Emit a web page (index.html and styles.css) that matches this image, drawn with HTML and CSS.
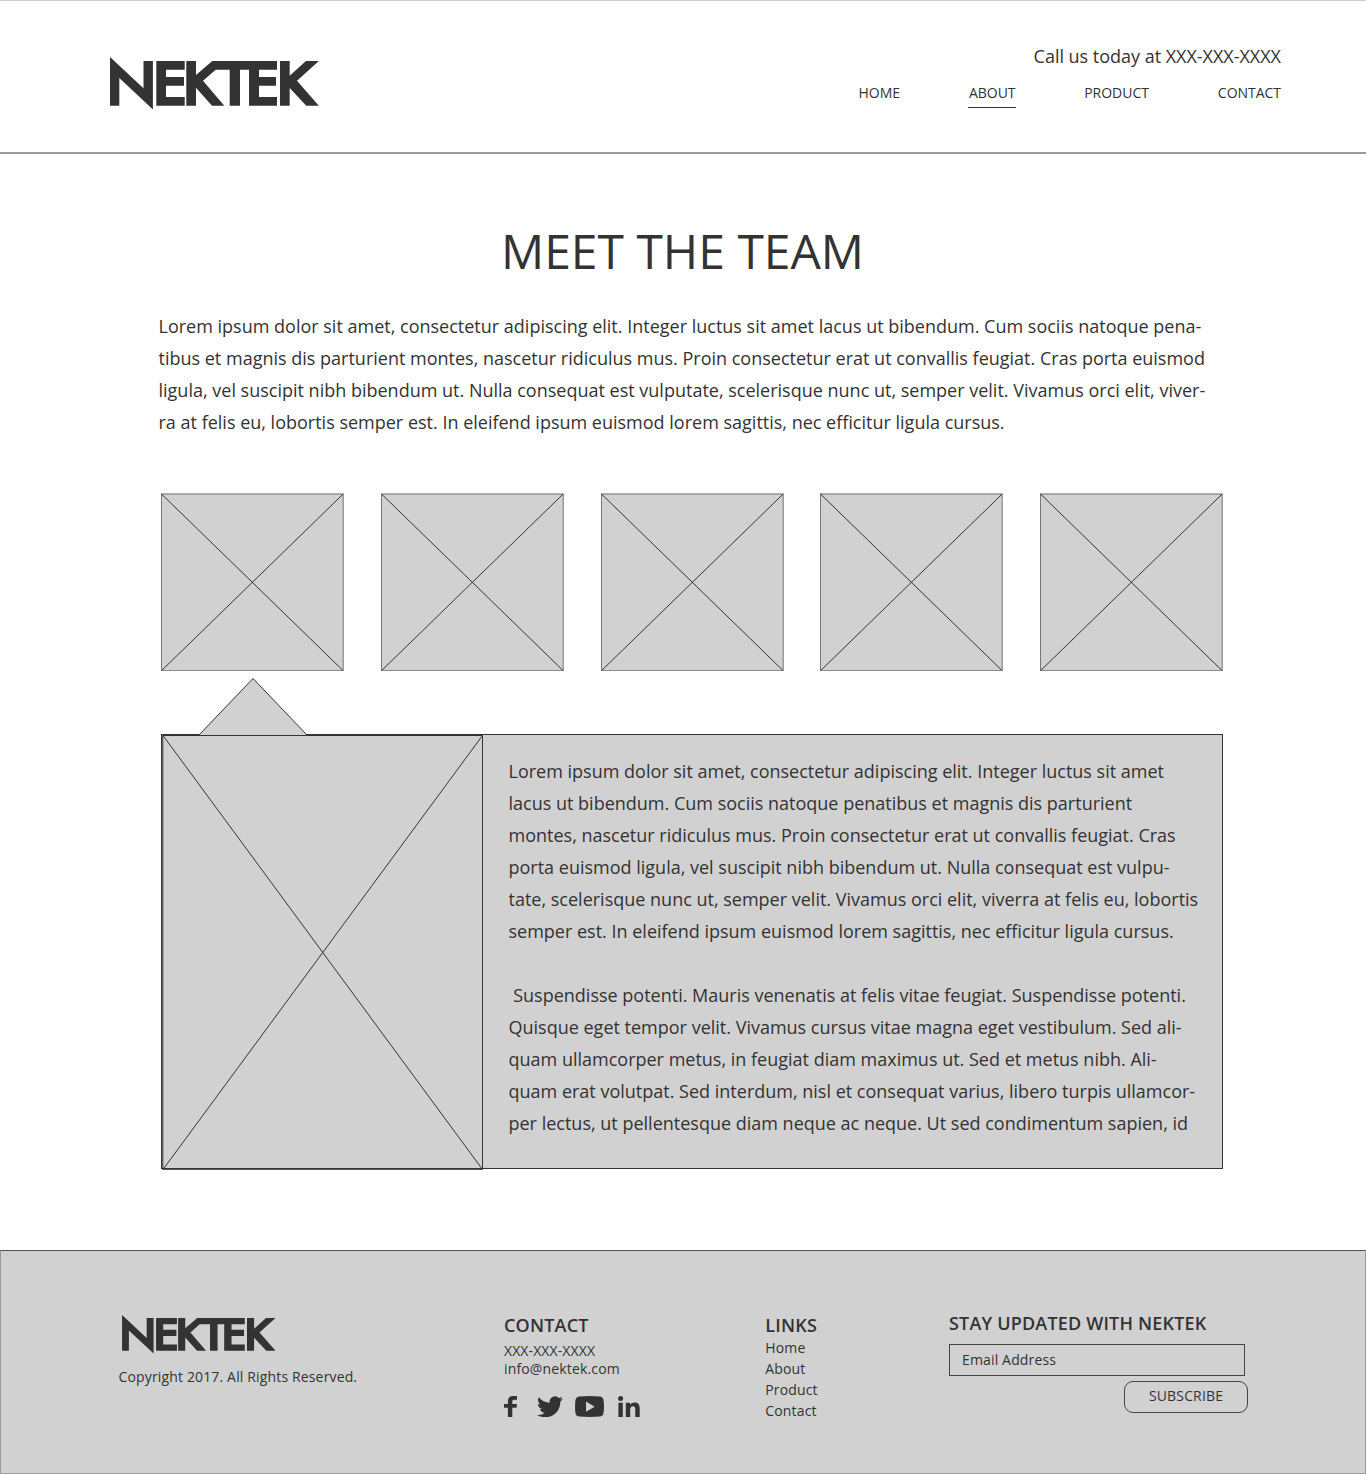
FILE: index.html
```html
<!DOCTYPE html>
<html lang="en">
<head>
<meta charset="utf-8">
<title>Nektek - Meet the Team</title>
<link rel="stylesheet" href="styles.css">
</head>
<body>
<svg class="defs" aria-hidden="true">
  <symbol id="logo" viewBox="0 0 209 52.4">
    <path d="M0 0 33.500 31.200V4h9.400v48.400L9.300 21V48.700H0zM46.300 4h28.400v8.700H56v7.300h18v8.700H56V40h18.700v8.700H46.300zM76.300 4H86v14L102.300 4H167v8.700H149v7.300h17v8.700H149V40h18v8.700H139V12.700h-9v36h-10.300v-36H105.700L93 23.700l21.300 25H102L86 30.700v18h-9.700zM170 4h9.700v14.700L196 4h12.900L187 23.700l21.900 25H196.300L179.700 31v17.700H170z"/>
  </symbol>
  <symbol id="placeholder" viewBox="0 0 183 178">
    <path class="fill" d="M.3.500h182.200V177.800H.3z"/>
    <path class="edge" d="M.5 1H182.200V177.700H.5z"/>
    <path class="line" d="M.5 1 182.200 177.700M182.200 1 .5 177.700"/>
  </symbol>
</svg>

<header class="header">
  <svg class="logo"><use href="#logo"/></svg>
  <div class="header-right">
    <p class="phone">Call us today at XXX-XXX-XXXX</p>
    <nav class="nav">
      <a>HOME</a><a class="active">ABOUT</a><a>PRODUCT</a><a>CONTACT</a>
    </nav>
  </div>
</header>

<main class="main">
  <h1 class="title">MEET THE TEAM</h1>
  <p class="intro">Lorem ipsum dolor sit amet, consectetur adipiscing elit. Integer luctus sit amet lacus ut bibendum. Cum sociis natoque pena-<br>tibus et magnis dis parturient montes, nascetur ridiculus mus. Proin consectetur erat ut convallis feugiat. Cras porta euismod<br>ligula, vel suscipit nibh bibendum ut. Nulla consequat est vulputate, scelerisque nunc ut, semper velit. Vivamus orci elit, viver-<br>ra at felis eu, lobortis semper est. In eleifend ipsum euismod lorem sagittis, nec efficitur ligula cursus.</p>

  <div class="team">
    <svg class="thumb"><use href="#placeholder"/></svg>
    <svg class="thumb"><use href="#placeholder"/></svg>
    <svg class="thumb"><use href="#placeholder"/></svg>
    <svg class="thumb"><use href="#placeholder"/></svg>
    <svg class="thumb"><use href="#placeholder"/></svg>
  </div>

  <section class="detail">
    <svg class="pointer" viewBox="0 0 110 58"><path d="M.5 57.500 55 .5 109 57.500z" fill="#d1d1d1"/><path d="M1 57 55 .5 109 57" fill="none" stroke="#333"/><path d="M1 57.500H109" stroke="#333"/></svg>
    <svg class="portrait" viewBox="0 0 322 435"><path class="portrait-frame" d="M.8.500H320.500V434.300H.8z"/><path class="line" d="M1 .5 320.500 434.500M320.500 .5 1 434.500"/></svg>
    <div class="bio">
      <p>Lorem ipsum dolor sit amet, consectetur adipiscing elit. Integer luctus sit amet<br>lacus ut bibendum. Cum sociis natoque penatibus et magnis dis parturient<br>montes, nascetur ridiculus mus. Proin consectetur erat ut convallis feugiat. Cras<br>porta euismod ligula, vel suscipit nibh bibendum ut. Nulla consequat est vulpu-<br>tate, scelerisque nunc ut, semper velit. Vivamus orci elit, viverra at felis eu, lobortis<br>semper est. In eleifend ipsum euismod lorem sagittis, nec efficitur ligula cursus.</p>
      <p>&nbsp;Suspendisse potenti. Mauris venenatis at felis vitae feugiat. Suspendisse potenti.<br>Quisque eget tempor velit. Vivamus cursus vitae magna eget vestibulum. Sed ali-<br>quam ullamcorper metus, in feugiat diam maximus ut. Sed et metus nibh. Ali-<br>quam erat volutpat. Sed interdum, nisl et consequat varius, libero turpis ullamcor-<br>per lectus, ut pellentesque diam neque ac neque. Ut sed condimentum sapien, id</p>
    </div>
  </section>
</main>

<footer class="footer">
  <div class="brand">
    <svg class="logo-small"><use href="#logo"/></svg>
    <p class="copyright">Copyright 2017. All Rights Reserved.</p>
  </div>
  <div class="contact">
    <h2>CONTACT</h2>
    <p class="contact-phone">XXX-XXX-XXXX</p>
    <p class="contact-mail">info@nektek.com</p>
    <div class="social">
      <svg width="13" height="21" viewBox="0 0 13 21"><path d="M3.900 21V11.700H0V8h3.900V5.200C3.900 1.700 6 0 9.200 0H13v3.700h-2.500C8.800 3.700 8.300 4.400 8.300 5.600V8H13l-.5 3.700H8.300V21z"/></svg>
      <svg width="26" height="21" viewBox="0 2 24 19.500" preserveAspectRatio="none"><path d="M23.950 4.570a10 10 0 0 1-2.820.77 4.960 4.960 0 0 0 2.160-2.720c-.95.550-2 .960-3.130 1.180a4.920 4.920 0 0 0-8.380 4.480C7.690 8.090 4.070 6.130 1.640 3.160a4.820 4.820 0 0 0-.67 2.480c0 1.710.87 3.210 2.190 4.100a4.900 4.900 0 0 1-2.230-.62v.06a4.920 4.920 0 0 0 3.950 4.830 5 5 0 0 1-2.210.08 4.940 4.940 0 0 0 4.600 3.420A9.870 9.870 0 0 1 0 19.540a13.990 13.990 0 0 0 7.550 2.210c9.050 0 14-7.500 14-13.980 0-.210 0-.420-.02-.63a9.940 9.940 0 0 0 2.420-2.570z"/></svg>
      <svg width="29" height="21" viewBox="0 0 29 21"><path fill-rule="evenodd" d="M4.500.4Q14.500-.4 24.500.4 28.300.6 28.600 4.500 29.300 10.500 28.600 16.500 28.300 20.400 24.500 20.600 14.500 21.400 4.500 20.600.7 20.400.4 16.500-.3 10.500.4 4.500.7.6 4.500.4zM11 5.500v10.300l8.700-5.100z"/></svg>
      <svg width="22" height="21" viewBox="0 0 22 21"><circle cx="2.600" cy="2.500" r="2.500"/><path d="M.4 6.800h4.400V21H.4zM7.800 6.800H12v2c.7-1.200 2.200-2.300 4.500-2.300 4.200 0 5.200 2.700 5.200 6.500v8h-4.400v-7c0-2-.2-3.800-2.400-3.800S12.200 12 12.200 14v7H7.800z"/></svg>
    </div>
  </div>
  <div class="links">
    <h2>LINKS</h2>
    <a>Home</a><a>About</a><a>Product</a><a>Contact</a>
  </div>
  <form class="subscribe">
    <h2>STAY UPDATED WITH NEKTEK</h2>
    <div class="email">Email Address</div>
    <div class="button">SUBSCRIBE</div>
  </form>
</footer>
</body>
</html>
```
FILE: styles.css
```css
* { box-sizing: border-box; }
body {
  margin: 0;
  height: 1474px;
  background: #fff;
  color: #333;
  font: 18px/32px "Open Sans", sans-serif;
  display: flex;
  flex-direction: column;
}
h1, h2, p { margin: 0; font-weight: 400; }
svg { display: block; fill: #333; }
.defs { width: 0; height: 0; position: absolute; }
.fill { fill: #d1d1d1; }
.edge { fill: none; stroke: #333; stroke-width: .6; }
.line { fill: none; stroke: #333; stroke-width: 1; }

.header {
  height: 154px;
  border-top: 1px solid #ccc;
  border-bottom: 2px solid #999;
  padding: 0 85px 0 110px;
  display: flex;
  justify-content: space-between;
}
.logo { width: 209px; height: 52.4px; margin-top: 56.300px; }
.header-right { display: flex; flex-direction: column; align-items: flex-end; padding-top: 39px; }
.phone { line-height: 32px; letter-spacing: -.02px; }
.nav { display: flex; gap: 69px; font-size: 14px; line-height: 20px; margin-top: 11px; letter-spacing: -.03px; }
.nav a { height: 25px; }
.nav .active { border-bottom: 1px solid #333; margin-left: -1px; padding-left: 1px; margin-right: -.3px; }

.main { flex: none; height: 1096px; padding-left: 158.500px; }
.title { width: 1048px; margin-top: 64px; text-align: center; font-size: 48px; line-height: 66px; }
.intro { margin-top: 26px; white-space: nowrap; }
.team { width: 1062px; margin: 55px 0 0 2.500px; display: grid; grid-template-columns: repeat(5, 183px); justify-content: space-between; }
.thumb { width: 183px; height: 178px; }
.detail { position: relative; width: 1061.500px; height: 435px; margin: 63px 0 0 2.500px; background: #d1d1d1; border: 1px solid #333; border-left-width: 1px; display: flex; }
.pointer { position: absolute; left: 36px; top: -57px; width: 110px; height: 58px; }
.portrait { flex: none; width: 322px; height: 435px; overflow: visible; }
.portrait-frame { fill: none; stroke: #333; stroke-width: 1; }
.bio { padding: 20px 0 0 24.500px; white-space: nowrap; }
.bio p + p { margin-top: 32px; }

.footer {
  height: 224px;
  background: #d1d1d1;
  border: 1px solid #999;
  border-top-color: #555;
  padding-left: 117px;
  display: flex;
  font-size: 14px;
  line-height: 21px;
  letter-spacing: .15px;
}
.footer h2 { font-size: 18px; font-weight: 600; line-height: 24px; white-space: nowrap; letter-spacing: .18px; }
.brand { width: 386px; padding-top: 64px; }
.logo-small { width: 153.700px; height: 38.500px; margin-left: 4px; }
.copyright { margin: 12px 0 0 .5px; }
.contact { width: 261px; padding-top: 62px; }
.contact-phone, .contact-mail { line-height: 18px; }
.contact-phone { margin-top: 5px; letter-spacing: .1px; }
.social { display: flex; margin-top: 18px; }
.social svg:nth-child(2) { margin-left: 20px; }
.social svg:nth-child(3) { margin-left: 12px; }
.social svg:nth-child(4) { margin-left: 14px; }
.links { width: 184px; padding: 62px 0 0 .3px; }
.links a { display: block; }
.subscribe { width: 299px; padding-top: 60px; display: flex; flex-direction: column; }
.email { width: 296px; height: 32px; border: 1px solid #444; margin-top: 9px; padding-left: 12px; line-height: 30px; }
.button { width: 124px; height: 32px; border: 1px solid #444; border-radius: 9px; margin-top: 5px; align-self: flex-end; text-align: center; line-height: 28px; }
```
